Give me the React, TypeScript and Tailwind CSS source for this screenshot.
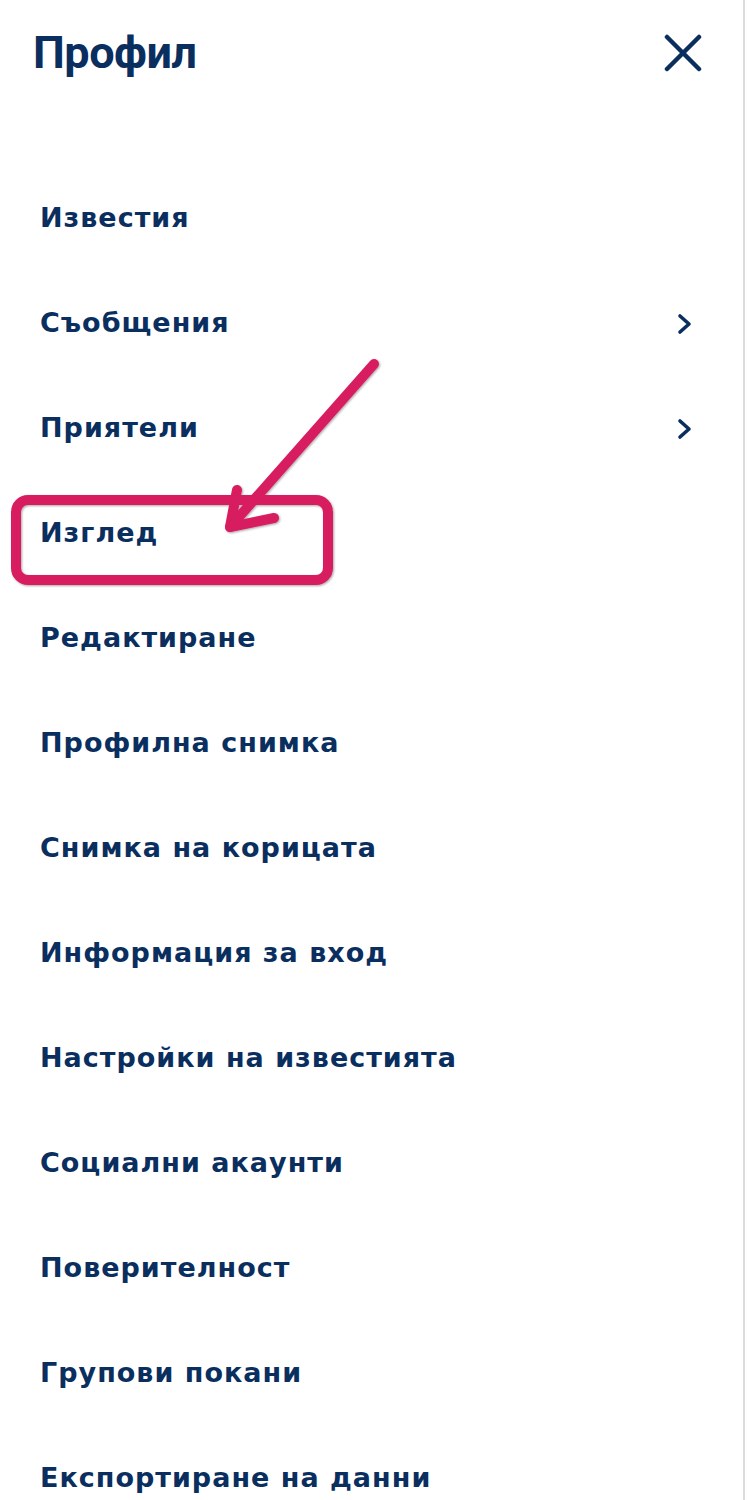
import { SVGProps } from "react";

const items: { label: string; more?: boolean }[] = [
    { label: "Известия" },
    { label: "Съобщения", more: true },
    { label: "Приятели", more: true },
    { label: "Изглед" },
    { label: "Редактиране" },
    { label: "Профилна снимка" },
    { label: "Снимка на корицата" },
    { label: "Информация за вход" },
    { label: "Настройки на известията" },
    { label: "Социални акаунти" },
    { label: "Поверителност" },
    { label: "Групови покани" },
    { label: "Експортиране на данни" },
];

export default function App() {
    return (
        <div lang="bg" className="relative w-[751px] h-[1500px] overflow-hidden bg-white">
            <div className="w-[745px] h-full border-r-2 border-[#dcdcdc] bg-white">
                <header className="h-[106px] flex items-center justify-between pl-[33px] pr-[41px]">
                    <h1 className="text-[45px] font-bold text-[#0a2f5f] tracking-[-0.5px] font-['Roboto',sans-serif]">
                        Профил
                    </h1>
                    <CloseIcon className="w-[38px] h-[38px] text-[#0a2f5f]" />
                </header>
                <ul className="mt-[60px] font-['DejaVu_Sans',sans-serif]">
                    {items.map((item) => (
                        <li
                            key={item.label}
                            className="h-[105px] flex items-center justify-between pl-[40px] pr-[50px]"
                        >
                            <span className="text-[27px] font-bold text-[#0a2f5f] tracking-[1px]">
                                {item.label}
                            </span>
                            {item.more && <ChevronIcon className="w-[16px] h-[22px] text-[#0a2f5f]" />}
                        </li>
                    ))}
                </ul>
            </div>

            {/* annotation drawn over the menu */}
            <svg
                className="absolute left-0 top-0 pointer-events-none"
                width="751"
                height="1500"
                viewBox="0 0 751 1500"
                fill="none"
            >
                <defs>
                    <filter id="shadow" x="-10%" y="-10%" width="120%" height="120%">
                        <feDropShadow dx="1" dy="1" stdDeviation="0.8" floodColor="#000" floodOpacity="0.35" />
                    </filter>
                </defs>
                <g filter="url(#shadow)" stroke="#d81d60" strokeLinecap="round" strokeLinejoin="round">
                    <rect x="16" y="500" width="312" height="80" rx="12" strokeWidth="10" />
                    <path d="M374 364 L230 527" strokeWidth="10" />
                    <path d="M237 490 L230 527 L274 518" strokeWidth="10" />
                </g>
            </svg>
        </div>
    );
}

function CloseIcon(props: SVGProps<SVGSVGElement>) {
    return (
        <svg
            {...props}
            viewBox="0 0 38 38"
            fill="none"
            stroke="currentColor"
            strokeWidth="4.5"
            strokeLinecap="round"
        >
            <path d="M3 3 L35 35" />
            <path d="M35 3 L3 35" />
        </svg>
    );
}

function ChevronIcon(props: SVGProps<SVGSVGElement>) {
    return (
        <svg
            {...props}
            viewBox="0 0 16 22"
            fill="none"
            stroke="currentColor"
            strokeWidth="3.6"
            strokeLinecap="round"
            strokeLinejoin="round"
        >
            <path d="M3 3 L12 11 L3 19" />
        </svg>
    );
}
